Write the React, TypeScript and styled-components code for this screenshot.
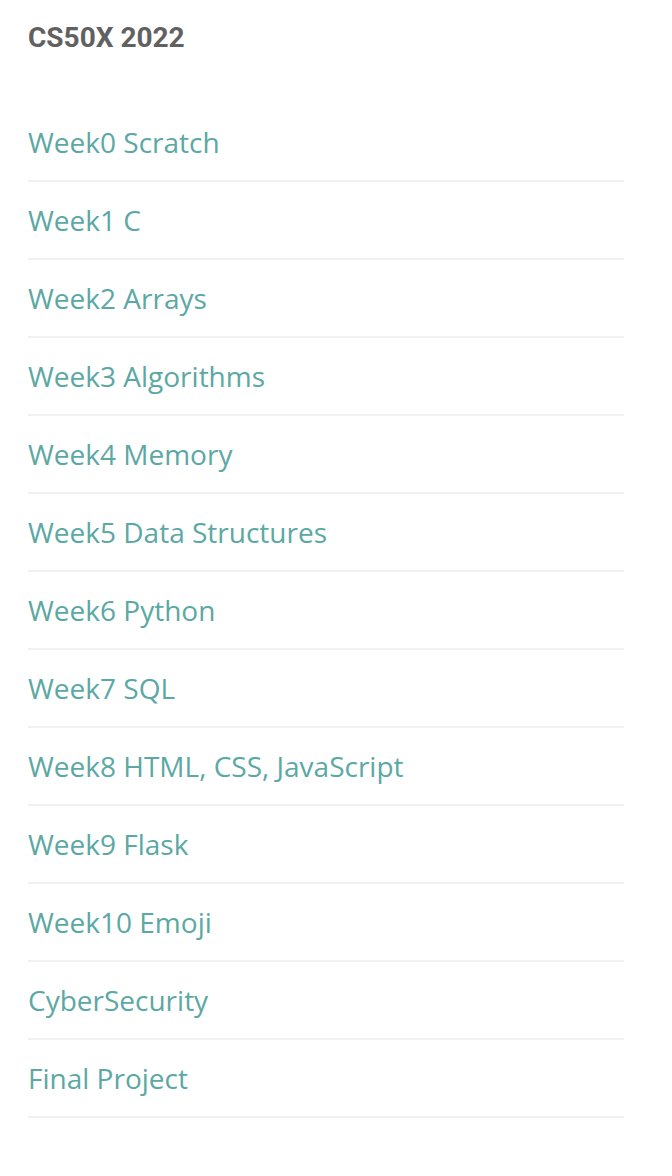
import React from "react";
import styled, { createGlobalStyle } from "styled-components";

const Global = createGlobalStyle`
  html, body { margin: 0; padding: 0; background: #ffffff; }
`;

const Wrapper = styled.div`
  padding: 20px 48px 40px 28px;
`;

const Heading = styled.h2`
  margin: 0 0 60px 0;
  font-family: Roboto, "Liberation Sans", sans-serif;
  font-weight: 700;
  font-size: 28px;
  line-height: 36px;
  color: #616161;
`;

const List = styled.ul`
  list-style: none;
  margin: 0;
  padding: 0;
`;

const Item = styled.li`
  border-bottom: 2px solid #f1f1f1;
  padding: 22px 0;
  &:first-child { padding-top: 10px; }
`;

const Link = styled.a`
  font-family: "Open Sans", "Liberation Sans", sans-serif;
  font-size: 28px;
  line-height: 32px;
  color: #5ba8a4;
  text-decoration: none;
  display: block;
`;

const items = [
  "Week0 Scratch",
  "Week1 C",
  "Week2 Arrays",
  "Week3 Algorithms",
  "Week4 Memory",
  "Week5 Data Structures",
  "Week6 Python",
  "Week7 SQL",
  "Week8 HTML, CSS, JavaScript",
  "Week9 Flask",
  "Week10 Emoji",
  "CyberSecurity",
  "Final Project",
];

export default function App() {
  return (
    <>
      <Global />
      <Wrapper>
        <Heading>CS50X 2022</Heading>
        <List>
          {items.map((t) => (
            <Item key={t}>
              <Link href="#">{t}</Link>
            </Item>
          ))}
        </List>
      </Wrapper>
    </>
  );
}
